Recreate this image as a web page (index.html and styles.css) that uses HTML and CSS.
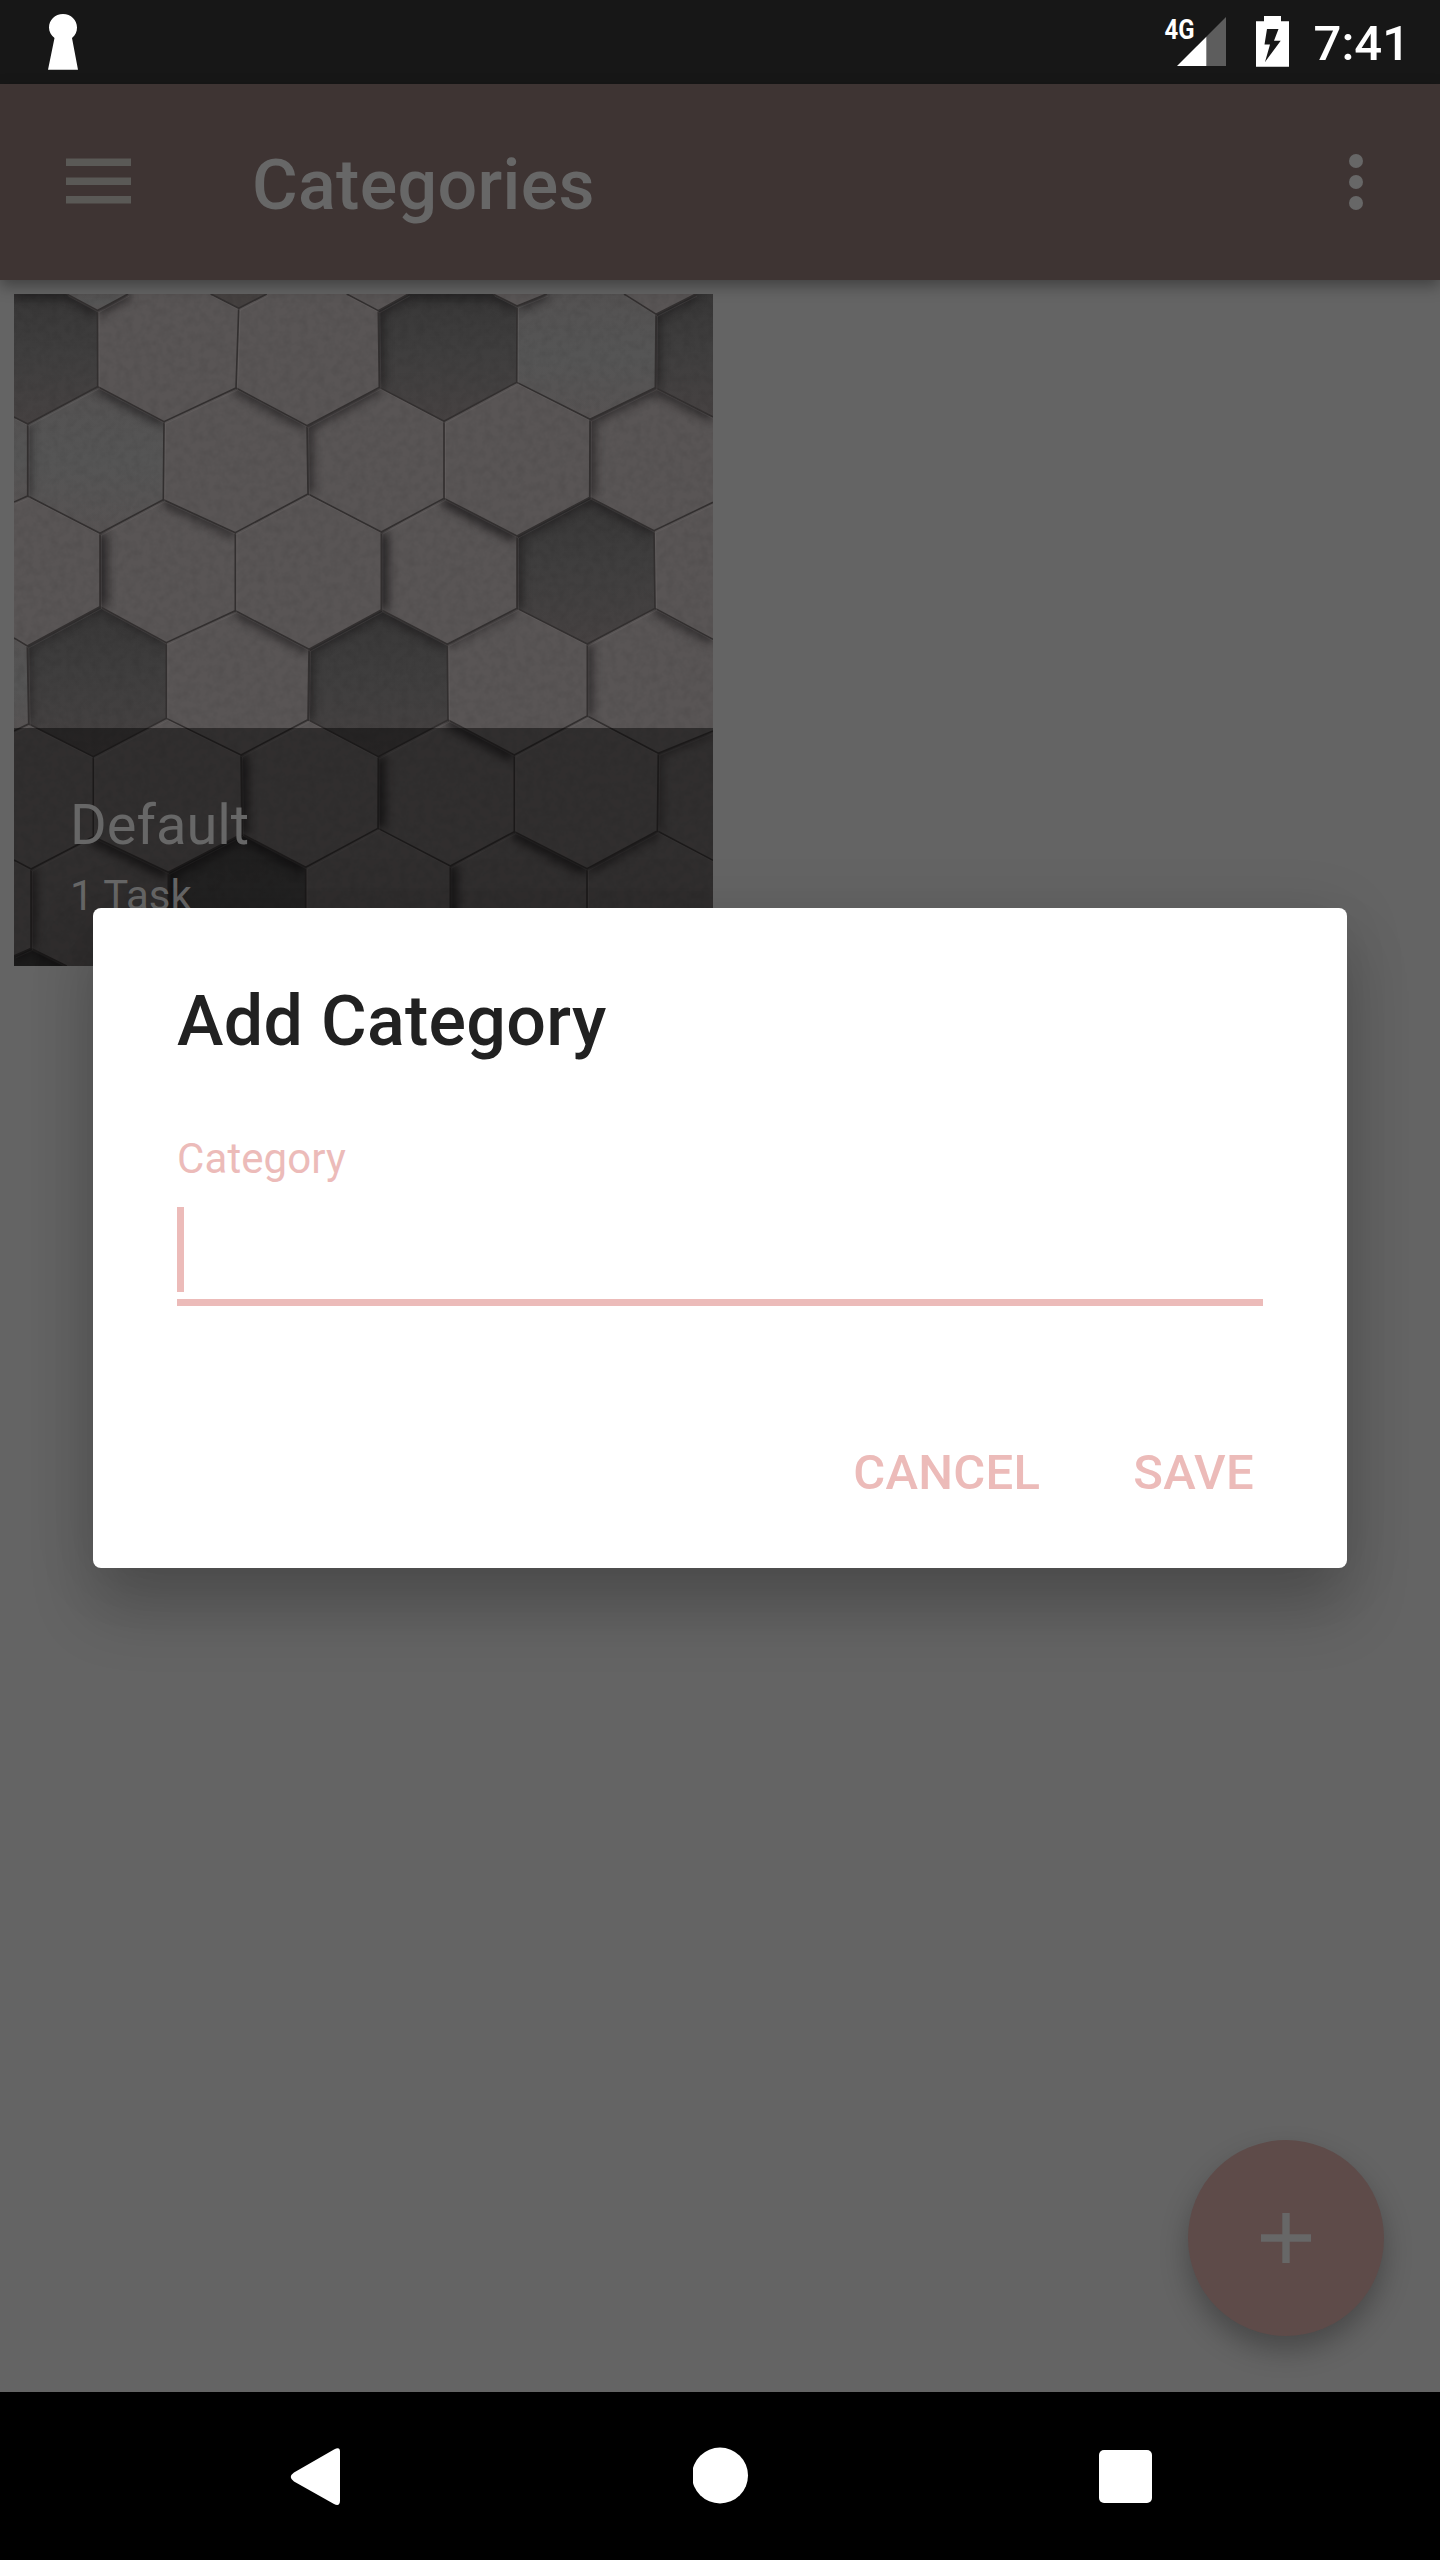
FILE: index.html
```html
<!DOCTYPE html>
<html lang="en">
<head>
<meta charset="utf-8">
<title>Categories</title>
<link rel="stylesheet" href="styles.css">
</head>
<body>
<div class="screen">
  <header class="status-bar">
    <svg class="keyhole" viewBox="48 14 30 56" width="30" height="56"><path d="M54.5 38C51 35 49 31.500 49 27.500C49 20 55 14 63 14C71 14 77 20 77 27.500C77 31.500 75.500 35 72 38L78 69.700H48Z"/></svg>
    <div class="status-icons">
      <svg class="signal" viewBox="1164 14 66 54" width="66" height="54">
        <path class="signal-off" d="M1207 37L1227 17V66H1207Z"/>
        <path d="M1178 66L1207.300 36.700V66Z"/>
        <text class="network" x="1165.500" y="38.500" textLength="30" lengthAdjust="spacingAndGlyphs">4G</text>
      </svg>
      <svg class="battery" viewBox="1257 14 33 54" width="33" height="54"><path fill-rule="evenodd" d="M1257 21.300H1265V16H1282V21.300H1290V66.700H1257ZM1268 29L1265.500 44.500H1271L1266 62L1281.700 40.700H1275L1279.500 29Z"/></svg>
      <span class="clock">7:41</span>
    </div>
  </header>

  <div class="app-bar">
    <svg class="menu-icon" viewBox="0 0 65 46" width="65" height="46"><path d="M0 .5H65V8H0ZM0 19.500H65V27H0ZM0 38H65V45.500H0Z"/></svg>
    <h1 class="app-title">Categories</h1>
    <svg class="more-icon" viewBox="0 0 14 56" width="14" height="56"><circle cx="7" cy="7" r="7"/><circle cx="7" cy="28" r="7"/><circle cx="7" cy="49" r="7"/></svg>
  </div>

  <main class="content">
    <article class="card">
      <svg class="card-art" viewBox="14 294 699 672" width="699" height="672">
        <defs>
          <linearGradient id="dark" x1="0" y1="0" x2="0" y2="1"><stop offset="0" stop-color="#383737"/><stop offset=".45" stop-color="#3f3e3e"/><stop offset="1" stop-color="#464242"/></linearGradient>
          <linearGradient id="cool" x1="0" y1="0" x2="0" y2="1"><stop offset="0" stop-color="#545252"/><stop offset=".5" stop-color="#555555"/><stop offset="1" stop-color="#575353"/></linearGradient>
          <filter id="soft" x="-100" y="-100" width="1600" height="1600" filterUnits="userSpaceOnUse" color-interpolation-filters="sRGB"><feGaussianBlur stdDeviation="5"/></filter>
          <filter id="grain" x="0" y="0" width="100%" height="100%" color-interpolation-filters="sRGB"><feTurbulence type="fractalNoise" baseFrequency=".12" numOctaves="3" seed="4"/><feColorMatrix values="0 0 0 0 0  0 0 0 0 0  0 0 0 0 0  1.200 0 0 0 -.45"/></filter>
          <clipPath id="a0"><path d="M14 294H66.700L97.500 311L97.700 387L27.700 424L14 417Z"/></clipPath>
          <clipPath id="a1"><path d="M97.500 311L128 294H210.700L238.700 308L236 388L164 422L97.700 387Z"/></clipPath>
          <clipPath id="a3"><path d="M378.300 311L408 294H493L517 306L516.700 382L444 421.300L379.300 387Z"/></clipPath>
          <clipPath id="a4"><path d="M517 306L546.700 294H624L656 314.300L655.300 387.700L590 419.300L516.700 382.300Z"/></clipPath>
          <clipPath id="a5"><path d="M656 314.300L696 294H713V417L655.300 387.700Z"/></clipPath>
          <clipPath id="b1"><path d="M27.700 424L97.700 387L164 421.700L163.300 499.700L100 533.300L27.700 496Z"/></clipPath>
          <clipPath id="b2"><path d="M164 421.700L236 388L307 425.700L308 494L235.300 532.700L163.300 499.700Z"/></clipPath>
          <clipPath id="b3"><path d="M307 425.700L379.300 387.300L444 421.300V498.300L381.300 532L308 494Z"/></clipPath>
          <clipPath id="b5"><path d="M590 419.300L655.300 387.700L713 417V502.300L654 530.700L589.700 497.300Z"/></clipPath>
          <clipPath id="c1"><path d="M100 533.300L163.300 499.700L235.300 532.700V610.700L166.300 642.700L100 606.700Z"/></clipPath>
          <clipPath id="c3"><path d="M381.300 532L444 498.300L517 536V608.300L447.300 644.300L381.300 610Z"/></clipPath>
          <clipPath id="c4"><path d="M517 536L589.700 497.300L654 530.700L655 608.300L587.300 644L517 608.300Z"/></clipPath>
          <clipPath id="d1"><path d="M27.300 646L100 606.700L166.300 642.700V718.300L93.300 756.700L28.700 724Z"/></clipPath>
          <clipPath id="d2"><path d="M166.300 642.700L235.300 610.700L309 649.300L308 719.700L241 755L166.300 718.300Z"/></clipPath>
          <clipPath id="d3"><path d="M309 649.300L381.300 610L447.300 644.300L448 720L378.300 756.700L308 719.700Z"/></clipPath>
          <clipPath id="d4"><path d="M447.300 644.300L517 608.300L587.300 644V716L514.300 755L448 720Z"/></clipPath>
          <clipPath id="d5"><path d="M587.300 644L655 608.300L713 639.300V731L658.300 753.300L587.300 716Z"/></clipPath>
          <clipPath id="e2"><path d="M241 755L308 719.700L378.300 756.700L378 828.300L305.700 867.300L242 834Z"/></clipPath>
          <clipPath id="e3"><path d="M378.300 756.700L448 720L514.300 755V831.700L450.300 866L378 828.300Z"/></clipPath>
          <clipPath id="e5"><path d="M658.300 753.300L713 731V860.300L657.300 831Z"/></clipPath>
          <clipPath id="f1"><path d="M31 869L93.300 836.700L168.300 872.300V966H66.700L31 948.300Z"/></clipPath>
          <clipPath id="f2"><path d="M168.300 872.300L242 834L305.700 867.300V966H168.300Z"/></clipPath>
          <clipPath id="f4"><path d="M450.300 866L514.300 831.700L587 868.700V966H450.300Z"/></clipPath>
          <clipPath id="f5"><path d="M587 868.700L657.300 831L713 860.300V966H587Z"/></clipPath>
          <clipPath id="g0"><path d="M14 956L31 948.300L66.700 966H14Z"/></clipPath>
        </defs>

        <rect class="tile" x="14" y="294" width="699" height="672"/>

        <!-- recessed and cool-toned tiles -->
        <path fill="#454140" d="M210.700 294H266.700L238.700 308Z"/>
        <path fill="url(#dark)" d="M14 294H66.700L97.500 311L97.700 387L27.700 424L14 417Z"/>
        <path fill="url(#dark)" d="M378.300 311L408 294H493L517 306L516.700 382L444 421.300L379.300 387Z"/>
        <path fill="url(#dark)" d="M656 314.300L696 294H713V417L655.300 387.700Z"/>
        <path fill="url(#dark)" d="M517 536L589.700 497.300L654 530.700L655 608.300L587.300 644L517 608.300Z"/>
        <path fill="url(#dark)" d="M27.300 646L100 606.700L166.300 642.700V718.300L93.300 756.700L28.700 724Z"/>
        <path fill="url(#dark)" d="M309 649.300L381.300 610L447.300 644.300L448 720L378.300 756.700L308 719.700Z"/>
        <path fill="url(#dark)" d="M168.300 872.300L242 834L305.700 867.300V966H168.300Z"/>
        <path fill="#343333" d="M14 956L31 948.300L66.700 966H14Z"/>
        <path fill="url(#cool)" d="M517 306L546.700 294H624L656 314.300L655.300 387.700L590 419.300L516.700 382.300Z"/>
        <path fill="url(#cool)" d="M27.700 424L97.700 387L164 421.700L163.300 499.700L100 533.300L27.700 496Z"/>
        <path fill="url(#cool)" d="M14 417L27.700 424V496L14 502Z"/>
        <path fill="url(#cool)" d="M14 638L27.300 646L28.700 724L14 731Z"/>
        <path fill="url(#cool)" d="M66.700 294H128L97.500 311Z"/>

        <!-- shadows cast by the raised neighbours -->
        <g clip-path="url(#a0)"><path class="shade" d="M14 294H66.700L97.500 311"/></g>
        <g clip-path="url(#a1)"><path class="shade" d="M97.500 311L128 294"/></g>
        <g clip-path="url(#a3)"><path class="shade" d="M379 387V311L408 294H493L517 306"/></g>
        <g clip-path="url(#a4)"><path class="shade" d="M517 306L546.700 294"/></g>
        <g clip-path="url(#a5)"><path class="shade" d="M655 388V314L696 294"/></g>
        <g clip-path="url(#b1)"><path class="shade" d="M97.700 387L164 421.700"/><path class="shade thin" d="M27.700 424V496"/></g>
        <g clip-path="url(#b2)"><path class="shade" d="M236 388L307 425.700"/></g>
        <g clip-path="url(#b3)"><path class="shade" d="M379 387L307 425.700L308 494"/></g>
        <g clip-path="url(#b5)"><path class="shade" d="M713 417L655 388"/><path class="shade" d="M655 388L590 419.300V497"/></g>
        <g clip-path="url(#c1)"><path class="shade deep" d="M100 606.700V533.300"/><path class="shade" d="M163.300 499.700L235.300 532.700"/></g>
        <g clip-path="url(#c3)"><path class="shade deep" d="M381.300 610V532"/><path class="shade deep" d="M444 498.300L517 536"/></g>
        <g clip-path="url(#c4)"><path class="shade" d="M517 608V536L589.700 497.300L654 530.700"/></g>
        <g clip-path="url(#d1)"><path class="shade thin" d="M28 724V646L100 606.700L166.300 642.700"/></g>
        <g clip-path="url(#d2)"><path class="shade" d="M235.300 610.700L309 649.300"/></g>
        <g clip-path="url(#d3)"><path class="shade" d="M308 719V649.300L381.300 610L447.300 644.300"/></g>
        <g clip-path="url(#d4)"><path class="shade thin" d="M447.300 644.300L517 608.300"/></g>
        <g clip-path="url(#d5)"><path class="shade" d="M587.300 716V644"/><path class="shade" d="M655 608.300L713 639.300"/></g>
        <g clip-path="url(#e2)"><path class="shade deep" d="M241 755V834"/></g>
        <g clip-path="url(#e3)"><path class="shade deep" d="M378.300 828V756.700"/><path class="shade deep" d="M448 720L514.300 755"/></g>
        <g clip-path="url(#e5)"><path class="shade thin" d="M658.300 831V753.300L713 731"/></g>
        <g clip-path="url(#f1)"><path class="shade" d="M31 948V869"/><path class="shade deep" d="M93.300 836.700L168.300 872.300"/></g>
        <g clip-path="url(#f2)"><path class="shade deep" d="M168.300 966V872.300L242 834L305.700 867.300"/></g>
        <g clip-path="url(#f4)"><path class="shade deep" d="M450.300 966V866"/><path class="shade deep" d="M514.300 831.700L587 868.700"/></g>
        <g clip-path="url(#f5)"><path class="shade" d="M587 868.700L657.300 831"/></g>
        <g clip-path="url(#g0)"><path class="shade" d="M14 956L31 948.300L66.700 966"/></g>

        <rect class="grain" x="14" y="294" width="699" height="672" filter="url(#grain)"/>

        <!-- seams between tiles, with a faint lit edge underneath -->
        <g class="seam">
          <path id="net" d="M66.700 294L97.500 310.500L128 294M210.700 294L238.700 308.300L266.700 294M346.700 294L378.300 310.700L408.300 294M493 294L517 306L546.700 294M624 294L656 314.300L695.700 294
          M97.500 310.500L97.700 386.700M238.700 308.300L236 388M378.300 310.700L379.300 387.300M517 306L516.700 382.300M656 314.300L655.300 387.700
          M14 417L27.700 424L97.700 386.700L164 421.700L236 388L307 425.700L379.300 387.300L444 421.300L516.700 382.300L590 419.300L655.300 387.700L713 417
          M27.700 424V496M164 421.700L163.300 499.700M307 425.700L308 494M444 421.300V498.300M590 419.300L589.700 497.300
          M14 502L27.700 496L100 533.300L163.300 499.700L235.300 532.700L308 494L381.300 532L444 498.300L517 536L589.700 497.300L654 530.700L713 502.300
          M100 533.300V606.700M235.300 532.700V610.700M381.300 532V610M517 536V608.300M654 530.700L655 608.300
          M14 638L27.300 646L100 606.700L166.300 642.700L235.300 610.700L309 649.300L381.300 610L447.300 644.300L517 608.300L587.300 644L655 608.300L713 639.300
          M27.300 646L28.700 724M166.300 642.700V718.300M309 649.300L308 719.700M447.300 644.300L448 720M587.300 644V716
          M14 731L28.700 724L93.300 756.700L166.300 718.300L241 755L308 719.700L378.300 756.700L448 720L514.300 755L587.300 716L658.300 753.300L713 731
          M93.300 756.700V836.700M241 755L242 834M378.300 756.700L378 828.300M514.300 755V831.700M658.300 753.300L657.300 831
          M14 860L31 869L93.300 836.700L168.300 872.300L242 834L305.700 867.300L378 828.300L450.300 866L514.300 831.700L587 868.700L657.300 831L713 860.300
          M31 869V948.300M168.300 872.300V966M305.700 867.300V966M450.300 866V966M587 868.700V966M14 956L31 948.300L66.700 966"/>
        </g>
        <use class="glint" href="#net" x="1.500" y="2"/>
      </svg>
      <div class="caption">
        <h2 class="caption-title">Default</h2>
        <p class="caption-count">1 Task</p>
      </div>
    </article>
  </main>

  <div class="fab">
    <svg viewBox="0 0 50 50" width="50" height="50"><path d="M21.300 0H28.700V21.300H50V28.700H28.700V50H21.300V28.700H0V21.300H21.300Z"/></svg>
  </div>

  <section class="dialog">
    <h2 class="dialog-title">Add Category</h2>
    <div class="field">
      <span class="field-label">Category</span>
      <div class="field-input"><i class="caret"></i></div>
    </div>
    <div class="actions">
      <span>CANCEL</span>
      <span>SAVE</span>
    </div>
  </section>

  <nav class="nav-bar">
    <svg viewBox="0 0 60 60" width="60" height="60"><path d="M50 4.500V53.500Q50 60 44 57L4 34.500Q-2.500 30 4 25.500L44 2.500Q50 -1 50 4.500Z"/></svg>
    <svg viewBox="0 0 60 60" width="60" height="60"><circle cx="27" cy="28.500" r="28"/></svg>
    <svg viewBox="0 0 60 60" width="60" height="60"><rect x="3" y="3" width="53" height="53" rx="5"/></svg>
  </nav>
</div>
</body>
</html>
```
FILE: styles.css
```css
* { box-sizing: border-box; }

body {
  margin: 0;
  font-family: Roboto, "Noto Sans", sans-serif;
}

h1, h2, p { margin: 0; }

svg { display: block; flex: none; }

.screen {
  position: relative;
  display: flex;
  flex-direction: column;
  width: 1440px;
  height: 2560px;
  overflow: hidden;
  background: #646464;
}

.status-bar {
  display: flex;
  justify-content: space-between;
  align-items: flex-start;
  height: 84px;
  padding: 14px 30px 0 48px;
  background: #171717;
  fill: #fff;
}

.status-icons { display: flex; }
.signal-off { fill: #5d5d5d; }
.network { font-size: 28px; font-weight: 700; }
.battery { margin-left: 27px; }

.clock {
  margin-left: 25px;
  margin-top: 1px;
  font-size: 49px;
  font-weight: 500;
  line-height: 57px;
  color: #fff;
}

.app-bar {
  z-index: 1;
  display: flex;
  align-items: center;
  height: 196px;
  padding: 0 77px 0 66px;
  background: #3e3433;
  box-shadow: 0 6px 14px rgba(0, 0, 0, .34);
}

.menu-icon { fill: #5a5956; margin-bottom: 3px; }

.app-title {
  flex: 1;
  margin-left: 121px;
  padding-top: 6px;
  font-size: 70px;
  font-weight: 500;
  line-height: 82px;
  letter-spacing: .3px;
  color: #676767;
}

.more-icon { fill: #676767; }

.content { flex: 1; padding: 14px; }

.card {
  display: grid;
  width: 699px;
  height: 672px;
}

.card-art, .caption { grid-area: 1 / 1; }
.tile { fill: #595555; }
.shade { fill: none; stroke: #1c1a1b; stroke-width: 11; opacity: .65; filter: url(#soft); }
.shade.thin { stroke-width: 7; opacity: .6; }
.shade.deep { stroke-width: 15; opacity: .75; }
.grain { opacity: .1; }
.seam { fill: none; stroke: #322f2f; stroke-width: 1.6; }
.glint { stroke: #8a8585; stroke-width: 1; opacity: .15; fill: none; }

.caption {
  align-self: end;
  height: 238px;
  padding: 64px 56px 0;
  background: rgba(0, 0, 0, .45);
  color: #676767;
}

.caption-title { font-size: 56px; font-weight: 400; line-height: 66px; }
.caption-count { margin-top: 13px; font-size: 42px; line-height: 50px; }

.fab {
  position: absolute;
  right: 56px;
  bottom: 224px;
  display: grid;
  place-items: center;
  width: 196px;
  height: 196px;
  border-radius: 50%;
  background: #5e4b49;
  fill: #676767;
  box-shadow: 0 14px 28px rgba(0, 0, 0, .28);
}

.dialog {
  position: absolute;
  left: 93px;
  top: 908px;
  width: 1254px;
  height: 660px;
  padding: 72px 84px 0;
  border-radius: 8px;
  background: #fff;
  color: #ecbbb9;
  box-shadow: 0 42px 64px rgba(0, 0, 0, .2), 0 6px 64px rgba(0, 0, 0, .1);
}

.dialog-title {
  font-size: 70px;
  font-weight: 500;
  line-height: 82px;
  letter-spacing: .3px;
  color: #212121;
}

.field { display: flex; flex-direction: column; margin-top: 72px; }
.field-label { font-size: 42px; line-height: 50px; letter-spacing: .1px; }

.field-input {
  height: 122px;
  padding-top: 23px;
  border-bottom: 7px solid #ecbbb9;
}

.caret { display: block; width: 7px; height: 85px; background: #ecbbb9; }

.actions {
  display: flex;
  justify-content: flex-end;
  gap: 93px;
  margin-top: 138px;
  padding-right: 9px;
  font-size: 49px;
  font-weight: 500;
  line-height: 58px;
  letter-spacing: .3px;
}

.nav-bar {
  display: flex;
  justify-content: space-between;
  height: 168px;
  padding: 55px 284px 0 290px;
  background: #000;
  fill: #fff;
}
```
